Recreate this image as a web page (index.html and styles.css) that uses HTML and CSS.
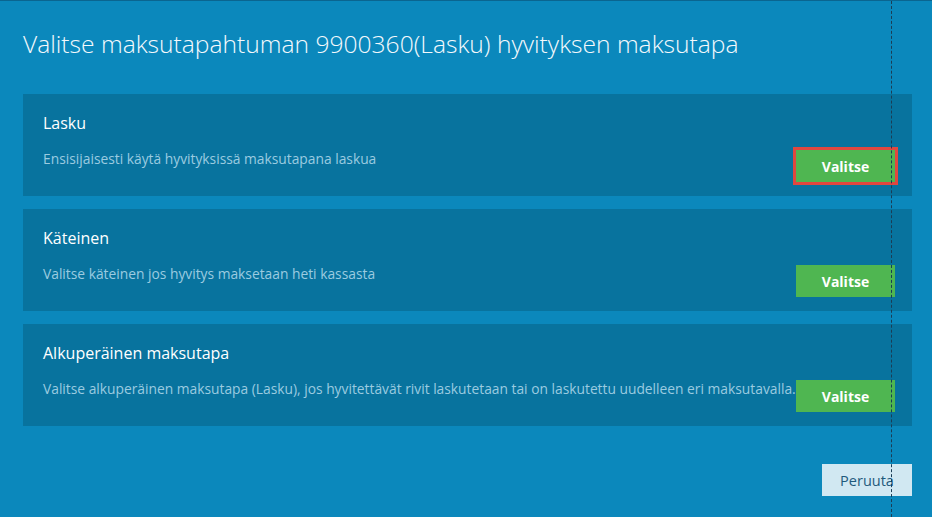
FILE: index.html
```html
<!DOCTYPE html>
<html lang="fi">
<head>
    <meta charset="UTF-8">
    <title>Hyvityksen maksutapa</title>
    <link rel="stylesheet" href="styles.css">
</head>
<body>
    <div class="guide"></div>
    <div class="dialog">
        <h1 class="dialog-title">Valitse maksutapahtuman 9900360(Lasku) hyvityksen maksutapa</h1>

        <div class="option">
            <h2 class="option-title">Lasku</h2>
            <div class="option-row">
                <p class="option-desc">Ensisijaisesti käytä hyvityksissä maksutapana laskua</p>
                <button class="select-btn selected">Valitse</button>
            </div>
        </div>

        <div class="option">
            <h2 class="option-title">Käteinen</h2>
            <div class="option-row">
                <p class="option-desc">Valitse käteinen jos hyvitys maksetaan heti kassasta</p>
                <button class="select-btn">Valitse</button>
            </div>
        </div>

        <div class="option">
            <h2 class="option-title">Alkuperäinen maksutapa</h2>
            <div class="option-row">
                <p class="option-desc">Valitse alkuperäinen maksutapa (Lasku), jos hyvitettävät rivit laskutetaan tai on laskutettu uudelleen eri maksutavalla.</p>
                <button class="select-btn">Valitse</button>
            </div>
        </div>

        <div class="actions">
            <button class="cancel-btn">Peruuta</button>
        </div>
    </div>
</body>
</html>
```

FILE: styles.css
```css
* {
    margin: 0;
    padding: 0;
    box-sizing: border-box;
}

body {
    font-family: 'Open Sans', 'Noto Sans', sans-serif;
    background: #0b88bc;
    border-top: 1px solid #0a6590;
    height: 517px;
    overflow: hidden;
    position: relative;
}

.guide {
    position: absolute;
    top: 0;
    bottom: 0;
    left: 891px;
    border-left: 1px dashed #1a3d55;
    z-index: 5;
}

.dialog {
    padding: 0 20px 0 23px;
}

.dialog-title {
    font-weight: 300;
    font-size: 24.6px;
    color: #f4f9fc;
    line-height: 32px;
    padding-top: 27px;
    margin-bottom: 34px;
}

.option {
    background: #08739e;
    padding: 18px 17px 16px 20px;
    margin-bottom: 13px;
    height: 102px;
}

.option-title {
    font-size: 16px;
    font-weight: 400;
    line-height: 22px;
    color: #ffffff;
}

.option-row {
    display: flex;
    align-items: flex-start;
    margin-top: 15px;
}

.option-desc {
    flex: 1;
    font-size: 13.8px;
    line-height: 20px;
    color: #9bcbe0;
    white-space: nowrap;
}

.select-btn {
    width: 99px;
    height: 32px;
    background: #4fb651;
    color: #ffffff;
    border: none;
    font-family: inherit;
    font-size: 14px;
    font-weight: 700;
    margin-top: 1px;
}

.select-btn.selected {
    outline: 3px solid #e0473f;
    outline-offset: 0;
}

.actions {
    display: flex;
    justify-content: flex-end;
    margin-top: 38px;
}

.cancel-btn {
    width: 90px;
    height: 32px;
    background: #d1e8f2;
    color: #1f5a7c;
    border: none;
    font-family: inherit;
    font-size: 14.5px;
}
```
